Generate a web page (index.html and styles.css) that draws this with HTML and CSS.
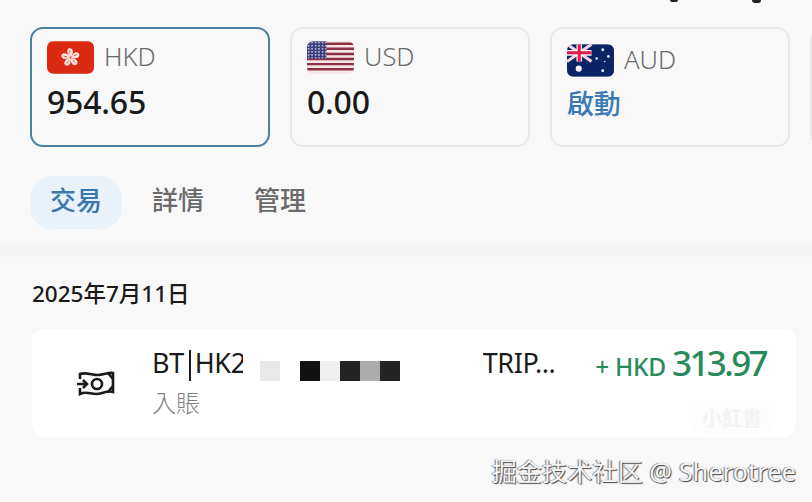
FILE: index.html
```html
<!DOCTYPE html>
<html lang="zh-Hant">
<head>
  <meta charset="UTF-8">
  <meta name="viewport" content="width=device-width, initial-scale=1.0">
  <title>帳戶</title>
  <link rel="stylesheet" href="styles.css">
</head>
<body>

  <div class="top-clip">
    <i class="clip-g"></i>
    <i class="clip-y"></i>
  </div>

  <div class="accounts">
    <div class="account active">
      <div class="account-head">
        <svg class="flag" viewBox="0 0 46 32">
          <rect width="46" height="32" rx="6" fill="#dc2a12"/>
          <g transform="translate(23 16)">
            <g id="petal">
              <path d="M0.5 -0.5C-3.5 -3 -4.5 -7 -1.5 -9C2 -10 4 -5.5 0.5 -0.5Z" fill="#fbe9e4"/>
              <path d="M-0.4 -3.5L-0.8 -7" stroke="#dc2a12" stroke-width="0.7"/>
            </g>
            <use href="#petal" transform="rotate(72)"/>
            <use href="#petal" transform="rotate(144)"/>
            <use href="#petal" transform="rotate(216)"/>
            <use href="#petal" transform="rotate(288)"/>
          </g>
        </svg>
        <span class="code">HKD</span>
      </div>
      <div class="balance">954.65</div>
    </div>

    <div class="account">
      <div class="account-head">
        <svg class="flag" viewBox="0 0 46 32">
          <defs>
            <clipPath id="us-clip"><rect width="46" height="32" rx="6"/></clipPath>
            <pattern id="us-stars" width="3.4" height="3" patternUnits="userSpaceOnUse">
              <circle cx="1.6" cy="1.5" r="0.8" fill="#e6e6f2"/>
            </pattern>
          </defs>
          <g clip-path="url(#us-clip)">
            <rect width="46" height="32" fill="#f6e4e6"/>
            <path d="M0 2.5H46M0 7.5H46M0 12.5H46M0 17.5H46M0 22.5H46M0 27.5H46" stroke="#8c3044" stroke-width="2.4"/>
            <rect width="19" height="17" fill="#3c3f7c"/>
            <rect width="19" height="17" fill="url(#us-stars)"/>
          </g>
        </svg>
        <span class="code">USD</span>
      </div>
      <div class="balance">0.00</div>
    </div>

    <div class="account shifted">
      <div class="account-head">
        <svg class="flag" viewBox="0 0 46 32">
          <defs>
            <clipPath id="au-clip"><rect width="46" height="32" rx="6"/></clipPath>
          </defs>
          <g clip-path="url(#au-clip)">
            <rect width="46" height="32" fill="#0b2468"/>
            <path d="M0 0L24 17M24 0L0 17" stroke="#f4d5dc" stroke-width="3"/>
            <path d="M12 0V17M0 8.5H24" stroke="#f4f0f2" stroke-width="5.5"/>
            <path d="M12 0V17M0 8.5H24" stroke="#e0184c" stroke-width="3"/>
          </g>
          <g fill="#f2f4fa">
            <circle cx="11.5" cy="24" r="3"/>
            <circle cx="35" cy="5.5" r="1.4"/>
            <circle cx="29" cy="14" r="1.2"/>
            <circle cx="40.5" cy="12" r="1.3"/>
            <circle cx="35" cy="26" r="1.4"/>
            <circle cx="37" cy="17" r="0.7"/>
          </g>
        </svg>
        <span class="code">AUD</span>
      </div>
      <div class="activate">啟動</div>
    </div>

    <div class="account"></div>
  </div>

  <div class="tabs">
    <div class="tab selected">交易</div>
    <div class="tab">詳情</div>
    <div class="tab">管理</div>
  </div>

  <div class="band"></div>

  <div class="date">2025年7月11日</div>

  <div class="txn">
    <svg class="txn-icon" viewBox="0 0 40 26">
      <path d="M4 9V4C10 2 16 5 22 5S32 2 37 3V22C31 20 26 24 20 24S10 21 4 24V18"/>
      <path d="M1 14H11M7 10L11 14L7 18"/>
      <circle cx="21" cy="14" r="5"/>
      <path d="M32 3L37 9M32 22L37 16"/>
    </svg>
    <div class="txn-info">
      <div class="txn-title">
        <span class="ref">BT<b class="caret"></b>HK2</span>
        <span class="mosaic">
          <i class="px-a"></i><i class="px-gap"></i><i class="px-b"></i><i class="px-c"></i><i class="px-d"></i><i class="px-e"></i><i class="px-d"></i>
        </span>
        <span>TRIP...</span>
      </div>
      <div class="txn-type">入賬</div>
    </div>
    <div class="txn-amount">
      <span class="cur">+ HKD</span> <span class="num">313.97</span>
    </div>
    <div class="stamp">小紅書</div>
  </div>

  <div class="watermark">掘金技术社区 @ Sherotree</div>

</body>
</html>
```

FILE: styles.css
```css
html, body {
  height: 100%;
}
body {
  font-family: "Noto Sans", "Noto Sans CJK TC", sans-serif;
  background-color: #f8f8f8;
  color: #1a1a1a;
  margin: 0;
  padding: 0;
  overflow: hidden;
  position: relative;
}
.top-clip {
  display: flex;
  height: 3px;
  padding-left: 670px;
  gap: 74px;
}
.clip-g {
  width: 8px;
  height: 2px;
  background-color: #222;
  border-radius: 0 0 4px 4px;
}
.clip-y {
  width: 9px;
  height: 3px;
  background-color: #222;
  border-radius: 0 0 5px 5px;
}
.accounts {
  display: flex;
  gap: 20px;
  margin-top: 24px;
  padding-left: 30px;
  overflow: hidden;
}
.account {
  flex: none;
  box-sizing: border-box;
  width: 240px;
  height: 120px;
  padding: 12px 15px;
  border: 2px solid #e8e8e8;
  border-radius: 13px;
}
.account.active {
  border-color: #4f7f9e;
}
.account-head {
  display: flex;
  align-items: center;
  gap: 10px;
  height: 33px;
}
.account.shifted .account-head {
  margin-top: 3px;
  margin-bottom: -3px;
}
.flag {
  width: 47px;
  height: 33px;
  flex: none;
}
.code {
  margin-bottom: 3px;
  font-size: 25.5px;
  font-weight: 300;
  color: #6b6b6b;
}
.balance, .activate {
  margin-top: 6px;
  font-size: 32px;
  line-height: 44px;
  font-weight: 500;
  letter-spacing: -0.2px;
}
.activate {
  margin-top: 8px;
  font-size: 27px;
  color: #3b78b4;
}
.tabs {
  display: flex;
  gap: 10px;
  margin-top: 29px;
  padding-left: 30px;
}
.tab {
  width: 92px;
  height: 53px;
  line-height: 48px;
  text-align: center;
  font-size: 26px;
  font-weight: 500;
  color: #6a6a6a;
  border-radius: 22px;
}
.tab.selected {
  background-color: #e9f1f9;
  color: #3a78ae;
}
.band {
  height: 30px;
  margin-top: 8px;
  background: linear-gradient(#f8f8f8, #f3f3f3 40%, #f8f8f8);
}
.date {
  margin-top: 11px;
  padding-left: 32px;
  font-size: 22.5px;
  line-height: 31px;
  font-weight: 500;
}
.txn {
  position: relative;
  box-sizing: border-box;
  display: flex;
  align-items: flex-start;
  width: 764px;
  height: 108px;
  margin: 20px 0 0 32px;
  padding: 0 30px 0 44px;
  background-color: white;
  border-radius: 12px;
}
.txn-icon {
  width: 40px;
  height: 26px;
  margin-top: 41px;
  flex: none;
  fill: none;
  stroke: #1a1a1a;
  stroke-width: 2.6;
}
.txn-info {
  flex: 1;
  margin-left: 36px;
  padding-top: 15px;
}
.txn-title {
  display: flex;
  font-size: 27px;
  line-height: 38px;
  letter-spacing: -0.4px;
  white-space: nowrap;
}
.ref {
  display: flex;
  align-items: center;
}
.caret {
  width: 2px;
  height: 31px;
  margin: 4px 4px 0 5px;
  background-color: #1a1a1a;
}
.mosaic {
  position: relative;
  display: flex;
  flex: none;
  box-sizing: border-box;
  width: 240px;
  height: 38px;
  margin-left: -3px;
  padding: 17px 0 0 17px;
  background-color: white;
}
.mosaic i {
  display: block;
  width: 20px;
  height: 20px;
}
.mosaic .px-a { background: #e8e8e8; }
.mosaic .px-gap { background: white; }
.mosaic .px-b { background: #111; }
.mosaic .px-c { background: #f0f0f0; }
.mosaic .px-d { background: #242424; }
.mosaic .px-e { background: #acacac; }
.txn-type {
  margin-top: 5px;
  font-size: 24px;
  line-height: 32px;
  font-weight: 300;
  color: #808080;
}
.txn-amount {
  color: #2a8a5c;
  white-space: nowrap;
  padding-top: 9px;
  line-height: 50px;
}
.cur {
  margin-right: 2px;
  font-size: 24.5px;
  font-weight: 500;
  letter-spacing: -0.3px;
}
.num {
  font-size: 35px;
  font-weight: 500;
  letter-spacing: -2.6px;
}
.stamp {
  position: absolute;
  right: 20px;
  bottom: 1px;
  padding: 4px 14px;
  border-radius: 18px;
  font-size: 20px;
  font-weight: 700;
  color: #f3f3f3;
  background-color: #fdfdfd;
}
.watermark {
  position: absolute;
  right: 16px;
  top: 453px;
  font-size: 25px;
  line-height: 36px;
  letter-spacing: 0.2px;
  color: #f6f6f6;
  text-shadow: 1px 1px 1px #444, -1px 0 1px #777;
  white-space: nowrap;
}
```
